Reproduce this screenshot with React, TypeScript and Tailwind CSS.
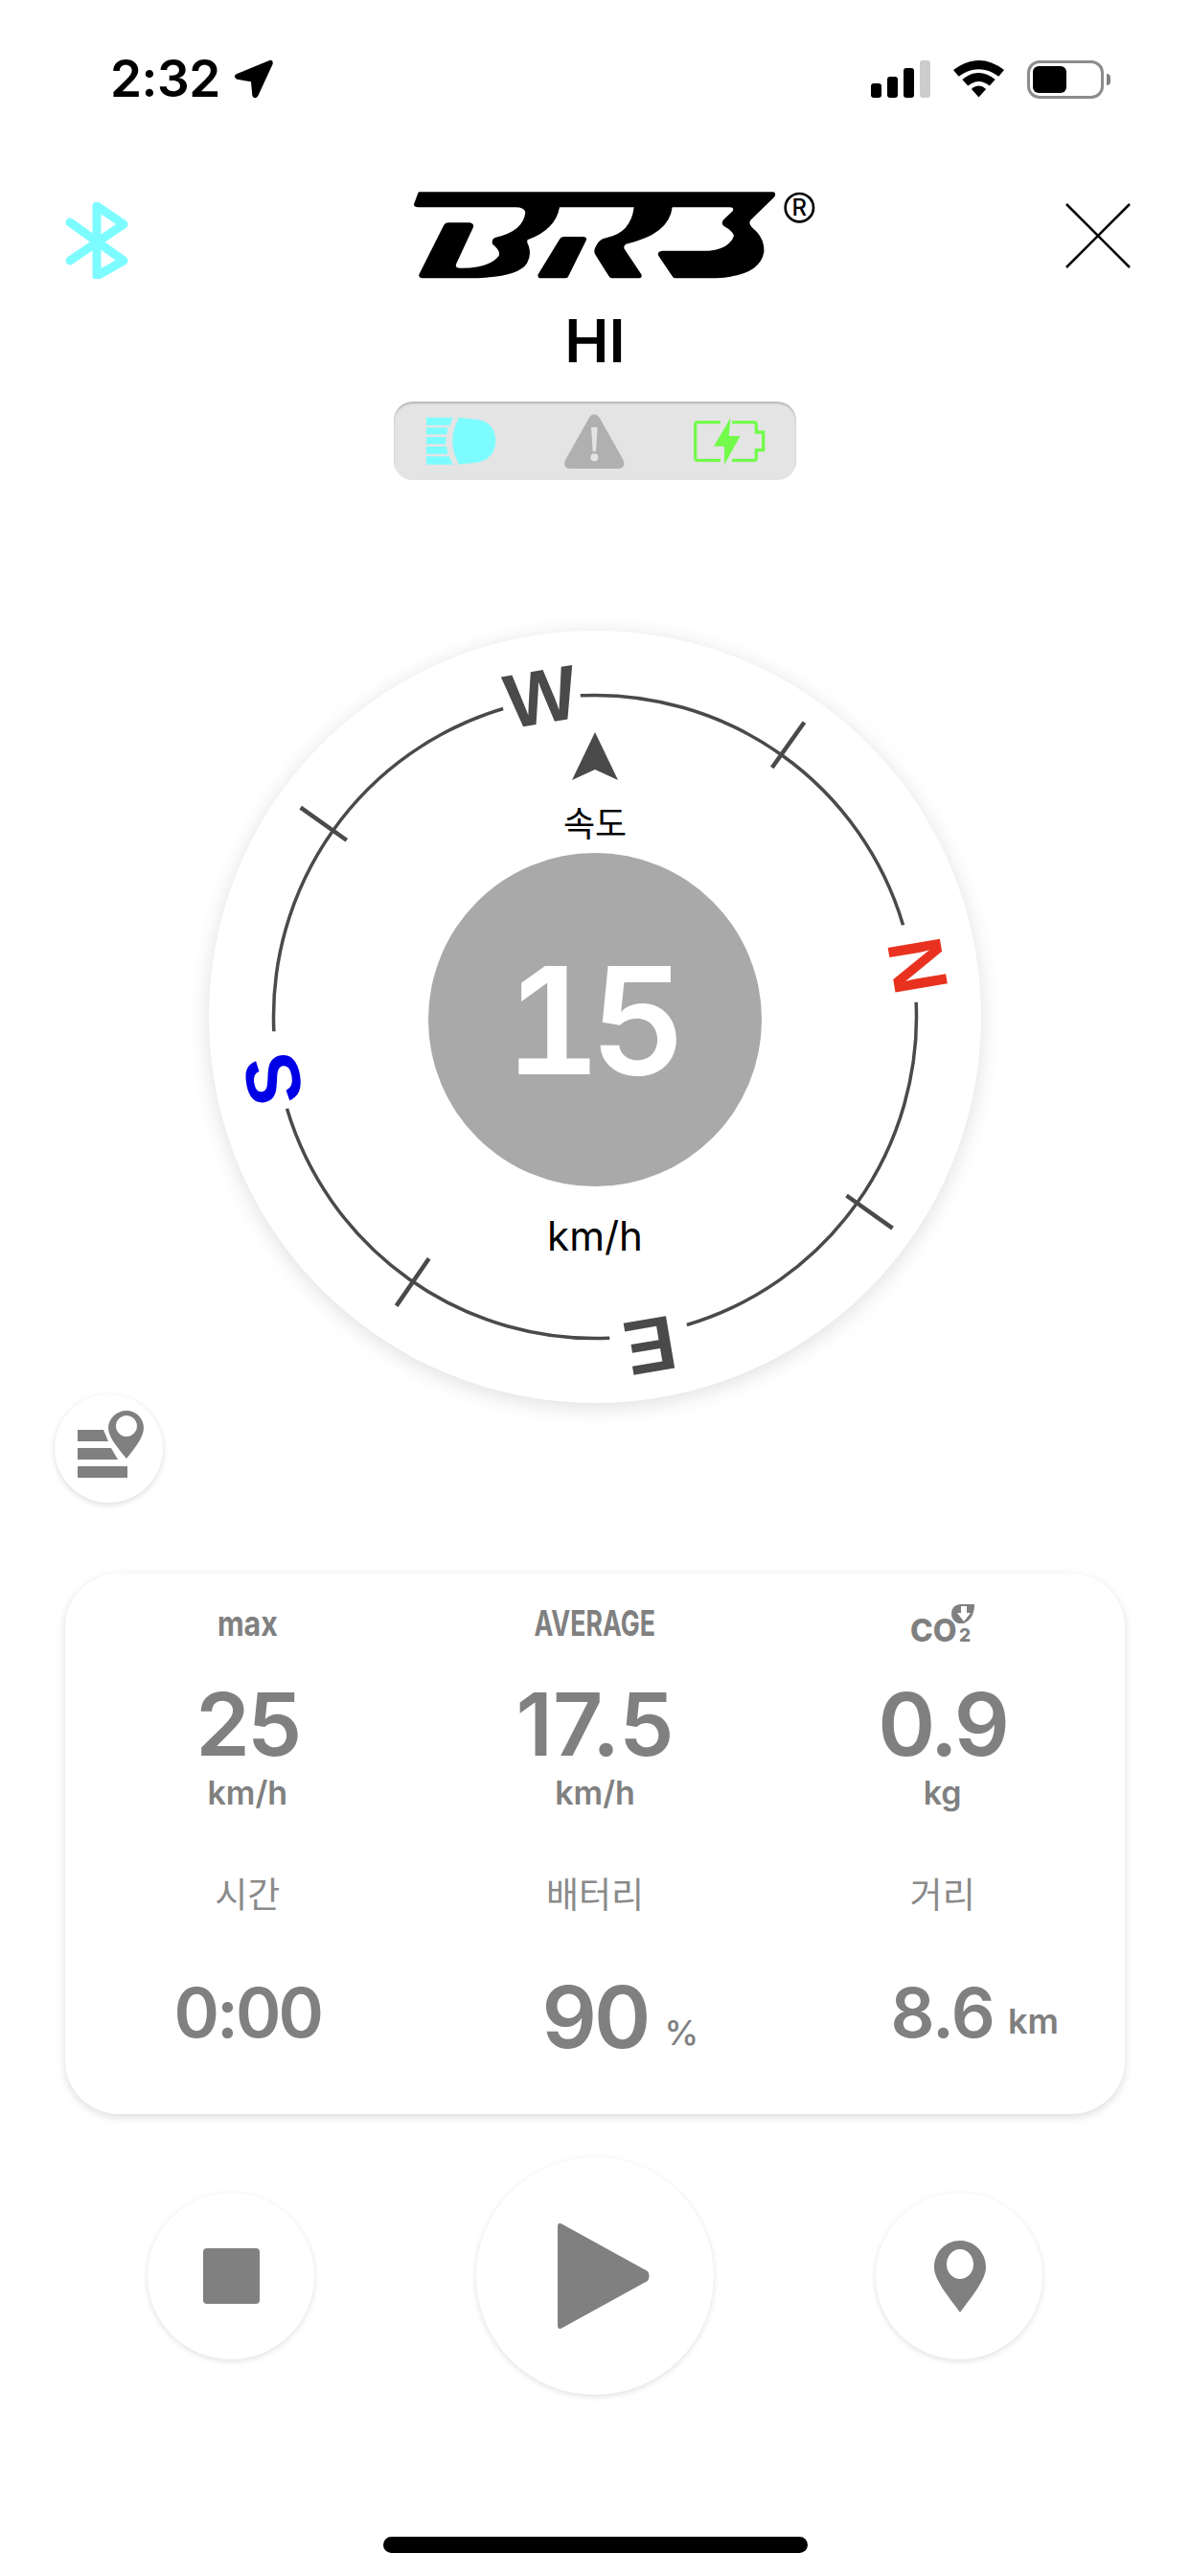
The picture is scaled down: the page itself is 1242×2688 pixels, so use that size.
import React from "react"

const SANS = "font-['Inter','Noto_Sans_CJK_KR',sans-serif]"

const polar = (deg: number, r: number) => {
    const a = ((deg - 90) * Math.PI) / 180
    return [403 + r * Math.cos(a), 403 + r * Math.sin(a)]
}

const ROT = -9.6
const arcs = [0, 90, 180, 270].map((q) => {
    const [x1, y1] = polar(q + ROT + 7, 335.5)
    const [x2, y2] = polar(q + ROT + 83, 335.5)
    return `M${x1} ${y1} A335.5 335.5 0 0 1 ${x2} ${y2}`
})
// the ticks are not quite even in the reference, so each keeps its own radii
const ticks = [
    { deg: 35.4, from: 319, to: 377 },
    { deg: 125.4, from: 322, to: 381 },
    { deg: 214.5, from: 306, to: 366 },
    { deg: 305.4, from: 318, to: 377 },
].map(({ deg, from, to }) => {
    const [x1, y1] = polar(deg, from)
    const [x2, y2] = polar(deg, to)
    return { x1, y1, x2, y2 }
})
const letters = [
    { t: "W", q: 0, c: "#4a4a4a", dx: 0, dy: 0 },
    { t: "N", q: 90, c: "#e8321f", dx: 3, dy: 3 },
    { t: "E", q: 180, c: "#4a4a4a", dx: 1, dy: 9 },
    { t: "S", q: 270, c: "#0000e6", dx: -2, dy: 9 },
]

const StatusBar = () => (
    <div className="flex h-[41px] items-center justify-between pl-[115px] pr-[90px] mt-[62px]">
        <div className="flex items-center gap-[14px]">
            <span className={`${SANS} text-[53px] leading-none font-semibold tracking-[-0.5px] text-black`}>2:32</span>
            <svg width="42" height="41" viewBox="0 0 126 123">
                <path d="M112 3 Q124 0 122 14 L76 114 Q66 128 58 114 L54 70 L10 62 Q-4 54 8 46 Z" fill="black" />
            </svg>
        </div>
        <div className="flex items-center">
            <div className="flex items-end gap-[6px] h-[39px]">
                <div className="w-[11px] h-[15px] rounded-[3px] bg-black" />
                <div className="w-[11px] h-[22px] rounded-[3px] bg-black" />
                <div className="w-[11px] h-[31px] rounded-[3px] bg-black" />
                <div className="w-[11px] h-[39px] rounded-[3px] bg-[#cccccc]" />
            </div>
            <svg className="ml-[24px]" width="53" height="39" viewBox="0 0 160 117">
                <path d="M0 30 Q80 -30 160 30 L143 50 Q80 5 17 50 Z" fill="black" />
                <path d="M28 60 Q80 18 132 60 L114 80 Q80 52 46 80 Z" fill="black" />
                <path d="M57 90 Q80 70 103 90 L80 116 Z" fill="black" />
            </svg>
            <div className="relative ml-[24px] w-[80px] h-[40px] rounded-[13px] border-[3px] border-[#8c8c8c] bg-white">
                <div className="mt-[3px] ml-[3px] w-[35px] h-[28px] rounded-[6px] bg-black" />
                <div className="absolute right-[-10px] top-[11px] w-[4px] h-[12px] rounded-r-full bg-[#808080]" />
            </div>
        </div>
    </div>
)

const Logo = () => (
    <svg className="mt-[2px] ml-[38px]" width="424" height="100" viewBox="90 55 1272 300">
        <path
            fill="black"
            d="M112 62 H1222 Q1232 66 1224 78 L1150 150 Q1142 162 1156 174 Q1195 205 1192 250 Q1180 325 1040 332 H915 Q908 332 904 324 L862 262 Q856 248 874 246 H1020 Q1085 240 1098 198 Q1092 182 1066 168 Q1056 160 1066 148 L1094 122 Q1100 110 1085 110 H905 Q895 195 760 225 Q750 232 756 242 L808 320 Q812 332 800 332 H716 Q710 332 706 325 L664 258 Q656 245 668 228 Q676 210 700 205 Q775 190 785 110 H552 Q540 180 452 212 Q448 218 455 230 Q465 260 450 285 Q420 332 260 332 H122 Q108 330 113 318 L190 165 Q194 158 205 158 H270 Q285 160 282 172 L228 288 Q225 300 240 300 Q330 302 362 262 Q368 245 342 225 Q338 210 350 205 Q440 185 445 125 Q440 110 415 110 H110 Q92 108 97 98 L108 68 Q110 62 112 62 Z"
        />
        <path
            fill="black"
            d="M495 332 H570 Q578 332 580 325 L636 212 Q638 202 625 202 H565 Q556 202 552 210 L485 320 Q482 332 495 332 Z"
        />
        <circle cx="1303" cy="111" r="44" fill="none" stroke="black" strokeWidth="8" />
        <text x="1303" y="137" textAnchor="middle" fontSize="72" fontFamily="Inter" fontWeight="500" fill="black">
            R
        </text>
    </svg>
)

const Header = () => (
    <div className="mt-[93px] pl-[68px] pr-[62px] flex items-start justify-between">
        <svg className="mt-[15px]" width="66" height="80" viewBox="68 211 66 80">
            <path
                d="M73 232 L129 272 L101 288 V215 L129 234 L73 272"
                fill="none"
                stroke="#7dfcff"
                strokeWidth="9"
                strokeLinejoin="round"
                strokeLinecap="round"
            />
        </svg>
        <Logo />
        <svg className="mt-[16px]" width="68" height="68" viewBox="0 0 68 68">
            <path d="M1 1 L67 67 M67 1 L1 67" stroke="black" strokeWidth="2.5" />
        </svg>
    </div>
)

const StatusPill = () => (
    <div className="mx-auto mt-[26px] w-[420px] h-[82px] rounded-[20px] bg-[#e4e4e4] shadow-[inset_0_2px_2px_rgba(0,0,0,0.2)] flex items-center justify-center">
        <svg width="420" height="82" viewBox="33 718 1260 246">
            <g fill="#7dfcff">
                <path d="M135 768 H218 L208 792 H135 Z" />
                <path d="M135 800 H203 L198 821 H135 Z" />
                <path d="M135 829 H196 L196 851 H135 Z" />
                <path d="M135 859 H198 L203 882 H135 Z" />
                <path d="M135 890 H206 L218 915 H135 Z" />
                <path d="M238 768 Q195 842 238 915 L300 908 Q350 895 352 842 Q350 785 300 775 Z" />
            </g>
            <path
                d="M645 768 Q660 748 677 768 L752 902 Q760 926 738 928 H584 Q560 926 570 902 Z"
                fill="#b0b0b0"
            />
            <path d="M651 798 H671 L666 874 H656 Z" fill="#e4e4e4" />
            <circle cx="661" cy="893" r="12" fill="#e4e4e4" />
            <g fill="none" stroke="#72fb4b" strokeWidth="10">
                <path d="M1056 783 H985 Q977 783 977 791 V894 Q977 902 985 902 H1056" />
                <path d="M1092 783 H1160 Q1168 783 1168 791 V814 H1190 V870 H1168 V894 Q1168 902 1160 902 H1092" />
            </g>
            <path d="M1088 768 L1035 858 H1068 V915 L1118 826 H1082 Z" fill="#72fb4b" />
        </svg>
    </div>
)

const Compass = () => (
    <div className="relative mx-auto mt-[157px] w-[806px] h-[806px] shrink-0 rounded-full bg-white shadow-[0_4px_22px_rgba(0,0,0,0.13)] flex flex-col items-center">
        <svg className="absolute inset-0" width="806" height="806" viewBox="0 0 806 806">
            {arcs.map((d) => (
                <path key={d} d={d} fill="none" stroke="#4a4a4a" strokeWidth="3.5" />
            ))}
            {ticks.map((t) => (
                <line key={t.x1} {...t} stroke="#4a4a4a" strokeWidth="4.5" />
            ))}
            {letters.map((l) => {
                const [px, py] = polar(l.q + ROT, 340)
                const x = px + l.dx
                const y = py + l.dy
                return (
                    <text
                        key={l.t}
                        x={x}
                        y={y + 29}
                        textAnchor="middle"
                        fontSize="80"
                        fontWeight="700"
                        fontFamily="Liberation Sans"
                        fill={l.c}
                        transform={`rotate(${l.q + ROT} ${x} ${y})`}
                    >
                        {l.t}
                    </text>
                )
            })}
        </svg>
        <svg className="mt-[106px]" width="48" height="51" viewBox="0 0 48 51">
            <path d="M24 0 L48 50 L24 39 L0 50 Z" fill="#4a4a4a" />
        </svg>
        <span className={`${SANS} mt-[23px] text-[36px] leading-[44px] text-black`}>속도</span>
        <div className="mt-[8px] w-[348px] h-[348px] rounded-full bg-[#a9a9a9] flex items-center justify-center">
            <span className={`${SANS} pr-[10px] text-[155px] leading-none font-semibold tabular-nums tracking-[-11px] text-white`}>15</span>
        </div>
        <span className={`${SANS} mt-[27px] text-[42px] leading-[50px] text-black`}>km/h</span>
    </div>
)

const RouteButton = () => (
    <div className="relative -mt-[9px] ml-[57px] w-[113px] h-[113px] rounded-full bg-white shadow-[0_2px_6px_rgba(0,0,0,0.14)] flex items-center justify-center">
        <svg width="113" height="113" viewBox="57 1456 113 113">
            <path d="M81 1493 H108 L113 1505 H81 Z M81 1512 H116 L123 1524 H81 Z M81 1531 H133 V1543 H81 Z" fill="#808080" />
            <path
                fillRule="evenodd"
                d="M132 1473 C142 1473 150 1481 150 1491 C150 1501 140 1513 132 1523 C124 1513 113 1501 113 1491 C113 1481 122 1473 132 1473 Z M132 1478 C126 1478 121 1483 121 1489 C121 1495 126 1500 132 1500 C138 1500 143 1495 143 1489 C143 1483 138 1478 132 1478 Z"
                fill="#808080"
            />
        </svg>
    </div>
)

const Co2Icon = () => (
    <svg width="72" height="54" viewBox="-2 -6 72 54">
        <text x="0" y="40" fontSize="32" fontWeight="800" fontFamily="Inter" fill="#808080">
            CO
        </text>
        <text x="51" y="40" fontSize="19" fontWeight="800" fontFamily="Inter" fill="#808080">
            2
        </text>
        <path d="M67 1 Q67 16 56 21 H50 Q43 18 43 11 Q43 2 52 1 Z" fill="#808080" />
        <path d="M53 3 H59 V10 H63 L56 19 L49 10 H53 Z" fill="white" />
    </svg>
)

const Stat = ({ value, unit, spacing }: { value: string; unit: string; spacing: string }) => (
    <div className="flex flex-col items-center">
        <span className={`${SANS} h-[76px] text-[91px] leading-[76px] font-semibold ${spacing} text-[#808080]`}>
            {value}
        </span>
        <span className={`${SANS} mt-[13px] text-[34px] leading-[42px] font-semibold text-[#808080]`}>{unit}</span>
    </div>
)

const labelClass = `${SANS} text-[37px] leading-[42px] font-bold text-[#808080]`
const koLabel = `${SANS} text-[37px] leading-[42px] text-[#8a8a8a]`

const StatsCard = () => (
    <div className="mx-[68px] mt-[74px] h-[564px] rounded-[56px] bg-white shadow-[0_3px_10px_rgba(0,0,0,0.14)] px-[9px] grid grid-cols-3 content-start">
        <div className="mt-[31px] h-[42px] flex items-center justify-center">
            <span className={`${labelClass} scale-x-[0.82]`}>max</span>
        </div>
        <div className="mt-[31px] h-[42px] flex items-center justify-center">
            <span className={`${labelClass} scale-x-[0.72]`}>AVERAGE</span>
        </div>
        <div className="mt-[31px] h-[42px] flex items-center justify-center">
            <Co2Icon />
        </div>
        <div className="mt-[46px]">
            <Stat value="25" unit="km/h" spacing="tracking-[-3px]" />
        </div>
        <div className="mt-[46px]">
            <Stat value="17.5" unit="km/h" spacing="tracking-[0px]" />
        </div>
        <div className="mt-[46px]">
            <Stat value="0.9" unit="kg" spacing="tracking-[-3px]" />
        </div>
        <div className={`mt-[65px] text-center ${koLabel}`}>시간</div>
        <div className={`mt-[65px] text-center ${koLabel}`}>배터리</div>
        <div className={`mt-[65px] text-center ${koLabel}`}>거리</div>
        <div className="mt-[61px] h-[80px] flex items-center justify-center">
            <span className={`${SANS} text-[72px] leading-none font-semibold tracking-[-3px] text-[#808080]`}>0:00</span>
        </div>
        <div className="mt-[61px] h-[80px] grid grid-cols-[1fr_auto_1fr] items-center">
            <span />
            <span className={`${SANS} text-[90px] leading-none font-semibold tracking-[-3px] text-[#808080]`}>90</span>
            <span className={`${SANS} ml-[17px] mt-[32px] text-[36px] leading-none font-medium text-[#808080]`}>%</span>
        </div>
        <div className="mt-[61px] h-[80px] grid grid-cols-[1fr_auto_1fr] items-center">
            <span />
            <span className={`${SANS} text-[72px] leading-none font-semibold tracking-[-1px] text-[#808080]`}>8.6</span>
            <span className={`${SANS} ml-[14px] mt-[18px] text-[36px] leading-none font-semibold text-[#808080]`}>km</span>
        </div>
    </div>
)

const RoundButton = ({ size, children }: { size: string; children: React.ReactNode }) => (
    <div
        className={`${size} rounded-full bg-white shadow-[0_2px_6px_rgba(0,0,0,0.12)] flex items-center justify-center`}
    >
        {children}
    </div>
)

const Controls = () => (
    <div className="mt-[45px] flex items-center justify-center gap-[169px]">
        <RoundButton size="w-[174px] h-[174px]">
            <div className="w-[59px] h-[58px] rounded-[4px] bg-[#808080]" />
        </RoundButton>
        <RoundButton size="w-[248px] h-[248px]">
            <svg className="ml-[17px]" width="98" height="112" viewBox="0 0 98 112">
                <path d="M1 5 Q1 -1 6 2 L95 51 Q98 56 95 61 L6 110 Q1 113 1 107 Z" fill="#808080" />
            </svg>
        </RoundButton>
        <RoundButton size="w-[174px] h-[174px]">
            <svg className="ml-[2px]" width="54" height="75" viewBox="0 0 54 75">
                <path
                    fillRule="evenodd"
                    d="M27 0 C42 0 54 12 54 28 C54 42 36 62 27 75 C18 62 0 42 0 28 C0 12 12 0 27 0 Z M27 9 C19 9 13 16 13 25 C13 33 19 40 27 40 C35 40 41 33 41 25 C41 16 35 9 27 9 Z"
                    fill="#808080"
                />
            </svg>
        </RoundButton>
    </div>
)

export default function App() {
    return (
        <div className="w-[1242px] h-[2688px] bg-white overflow-hidden flex flex-col">
            <StatusBar />
            <Header />
            <div className={`${SANS} mt-[20px] text-center text-[62px] leading-[75px] font-semibold text-black`}>HI</div>
            <StatusPill />
            <Compass />
            <RouteButton />
            <StatsCard />
            <Controls />
            <div className="mx-auto mt-[148px] w-[443px] h-[17px] rounded-full bg-black" />
        </div>
    )
}
